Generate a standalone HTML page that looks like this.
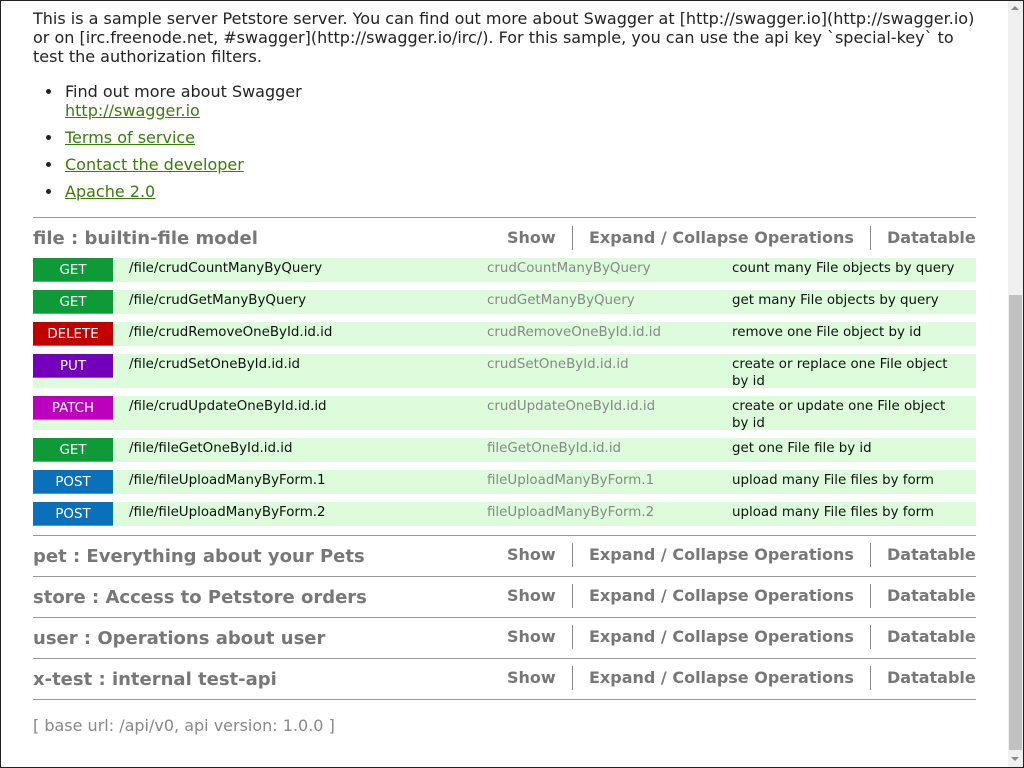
<!DOCTYPE html>
<html><head><meta charset="utf-8"><style>
html,body{margin:0;padding:0;}
body{width:1024px;height:768px;overflow:hidden;position:relative;background:#fff;font-family:"DejaVu Sans","Liberation Sans",sans-serif;color:#222;}
.frame{position:absolute;left:0;top:0;width:1022px;height:766px;border:1px solid #222;}
.a{position:absolute;white-space:nowrap;}
.intro{left:33px;top:9px;font-size:16px;line-height:19px;width:945px;white-space:normal;}
.li{left:65px;font-size:16px;line-height:19px;}
.dot{position:absolute;left:-19px;top:7px;width:5px;height:5px;border-radius:50%;background:#222;}
a{color:#3b7c0a;text-decoration:underline;}
.hr{position:absolute;left:33px;width:943px;height:1px;background:#999;}
.h{position:absolute;left:33px;font-size:18px;font-weight:bold;color:#777;line-height:22px;}
.ops{position:absolute;font-size:16px;font-weight:bold;color:#777;line-height:20px;}
.sep{position:absolute;width:1px;height:24px;background:#888;}
.row{position:absolute;left:33px;width:943px;background:#dcfcdc;}
.b{position:absolute;left:0;top:0;width:80px;height:23px;border-bottom:1px solid rgba(255,255,255,.3);color:#fff;font-size:13.4px;text-align:center;line-height:26px;}
.p{position:absolute;left:96px;top:2px;font-size:13.4px;line-height:17px;color:#111;}
.n{position:absolute;left:454px;top:2px;font-size:13.4px;line-height:17px;color:#888;}
.d{position:absolute;left:699px;top:2px;font-size:13.4px;line-height:17px;color:#111;width:225px;white-space:normal;}
.sb{position:absolute;left:1008px;top:1px;width:15px;height:766px;background:#f0f0f0;}
.th{position:absolute;left:1009px;top:295px;width:13px;height:455px;background:#c1c1c1;}
</style></head><body>
<div class="frame"></div>
<div class="a intro">This is a sample server Petstore server. You can find out more about Swagger at [http://swagger.io](http://swagger.io) or on [irc.freenode.net, #swagger](http://swagger.io/irc/). For this sample, you can use the api key `special-key` to test the authorization filters.</div>
<div class="a li" style="top:82px"><span class="dot"></span>Find out more about Swagger<br><a>http://swagger.io</a></div>
<div class="a li" style="top:128px"><span class="dot"></span><a>Terms of service</a></div>
<div class="a li" style="top:155px"><span class="dot"></span><a>Contact the developer</a></div>
<div class="a li" style="top:182px"><span class="dot"></span><a>Apache 2.0</a></div>

<div class="hr" style="top:217px"></div>
<div class="h" style="top:228px">file : builtin-file model</div>
<div class="ops" style="left:507px;top:228px">Show</div><div class="sep" style="left:572px;top:226px"></div>
<div class="ops" style="left:589px;top:228px">Expand / Collapse Operations</div><div class="sep" style="left:870px;top:226px"></div>
<div class="ops" style="left:887px;top:228px">Datatable</div>

<div class="row" style="top:258px;height:24px"><div class="b" style="background:#0f9a38">GET</div><div class="p">/file/crudCountManyByQuery</div><div class="n">crudCountManyByQuery</div><div class="d">count many File objects by query</div></div>
<div class="row" style="top:290px;height:24px"><div class="b" style="background:#0f9a38">GET</div><div class="p">/file/crudGetManyByQuery</div><div class="n">crudGetManyByQuery</div><div class="d">get many File objects by query</div></div>
<div class="row" style="top:322px;height:24px"><div class="b" style="background:#c20000">DELETE</div><div class="p">/file/crudRemoveOneById.id.id</div><div class="n">crudRemoveOneById.id.id</div><div class="d">remove one File object by id</div></div>
<div class="row" style="top:354px;height:34px"><div class="b" style="background:#7300bb">PUT</div><div class="p">/file/crudSetOneById.id.id</div><div class="n">crudSetOneById.id.id</div><div class="d">create or replace one File object by id</div></div>
<div class="row" style="top:396px;height:34px"><div class="b" style="background:#bd00bd">PATCH</div><div class="p">/file/crudUpdateOneById.id.id</div><div class="n">crudUpdateOneById.id.id</div><div class="d">create or update one File object by id</div></div>
<div class="row" style="top:438px;height:24px"><div class="b" style="background:#0f9a38">GET</div><div class="p">/file/fileGetOneById.id.id</div><div class="n">fileGetOneById.id.id</div><div class="d">get one File file by id</div></div>
<div class="row" style="top:470px;height:24px"><div class="b" style="background:#0a70ba">POST</div><div class="p">/file/fileUploadManyByForm.1</div><div class="n">fileUploadManyByForm.1</div><div class="d">upload many File files by form</div></div>
<div class="row" style="top:502px;height:24px"><div class="b" style="background:#0a70ba">POST</div><div class="p">/file/fileUploadManyByForm.2</div><div class="n">fileUploadManyByForm.2</div><div class="d">upload many File files by form</div></div>

<div class="hr" style="top:535px"></div>
<div class="h" style="top:546px">pet : Everything about your Pets</div>
<div class="ops" style="left:507px;top:545px">Show</div><div class="sep" style="left:572px;top:543px"></div>
<div class="ops" style="left:589px;top:545px">Expand / Collapse Operations</div><div class="sep" style="left:870px;top:543px"></div>
<div class="ops" style="left:887px;top:545px">Datatable</div>

<div class="hr" style="top:576px"></div>
<div class="h" style="top:587px">store : Access to Petstore orders</div>
<div class="ops" style="left:507px;top:586px">Show</div><div class="sep" style="left:572px;top:584px"></div>
<div class="ops" style="left:589px;top:586px">Expand / Collapse Operations</div><div class="sep" style="left:870px;top:584px"></div>
<div class="ops" style="left:887px;top:586px">Datatable</div>

<div class="hr" style="top:617px"></div>
<div class="h" style="top:628px">user : Operations about user</div>
<div class="ops" style="left:507px;top:627px">Show</div><div class="sep" style="left:572px;top:625px"></div>
<div class="ops" style="left:589px;top:627px">Expand / Collapse Operations</div><div class="sep" style="left:870px;top:625px"></div>
<div class="ops" style="left:887px;top:627px">Datatable</div>

<div class="hr" style="top:658px"></div>
<div class="h" style="top:669px">x-test : internal test-api</div>
<div class="ops" style="left:507px;top:668px">Show</div><div class="sep" style="left:572px;top:666px"></div>
<div class="ops" style="left:589px;top:668px">Expand / Collapse Operations</div><div class="sep" style="left:870px;top:666px"></div>
<div class="ops" style="left:887px;top:668px">Datatable</div>

<div class="hr" style="top:699px"></div>
<div class="a" style="left:33px;top:716px;font-size:16px;line-height:20px;color:#888">[ base url: /api/v0, api version: 1.0.0 ]</div>

<div class="sb"></div><div class="th"></div>
<div class="a" style="left:1011px;top:6px;width:0;height:0;border-left:4px solid transparent;border-right:4px solid transparent;border-bottom:4px solid #888"></div>
<div class="a" style="left:1011px;top:757px;width:0;height:0;border-left:4px solid transparent;border-right:4px solid transparent;border-top:4px solid #888"></div>
</body></html>
